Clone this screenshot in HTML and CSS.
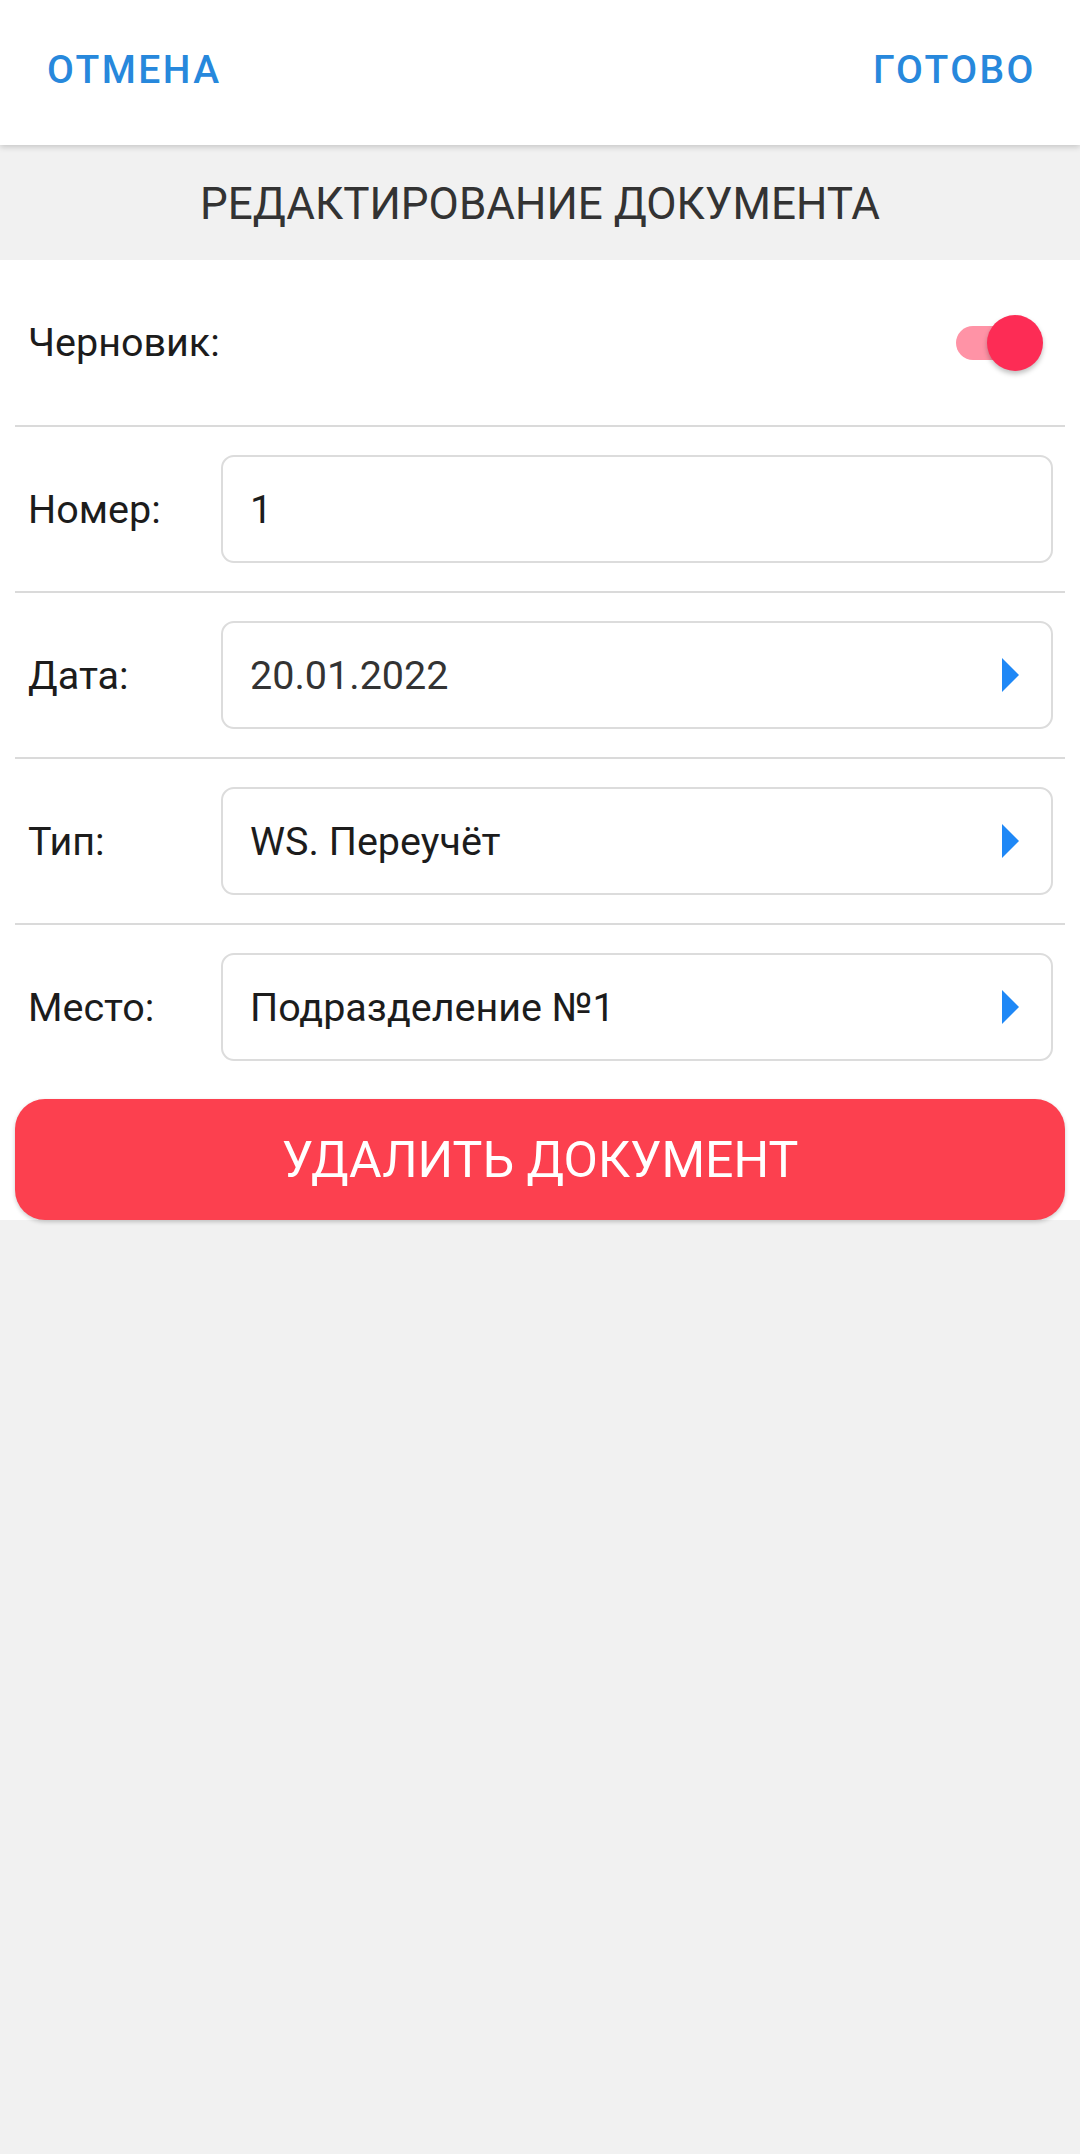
FILE: index.html
```html
<!DOCTYPE html>
<html lang="ru">
<head>
<meta charset="utf-8">
<title>Редактирование документа</title>
<link rel="stylesheet" href="styles.css">
</head>
<body>
<header class="topbar">
  <span class="topbar-btn">ОТМЕНА</span>
  <span class="topbar-btn">ГОТОВО</span>
</header>
<div class="section-title">РЕДАКТИРОВАНИЕ ДОКУМЕНТА</div>
<main class="form">
  <div class="row row-first">
    <span class="label">Черновик:</span>
    <span class="toggle"><span class="toggle-track"></span><span class="toggle-thumb"></span></span>
  </div>
  <div class="row">
    <span class="label">Номер:</span>
    <div class="field"><span class="field-value">1</span></div>
  </div>
  <div class="row">
    <span class="label">Дата:</span>
    <div class="field"><span class="field-value muted">20.01.2022</span><svg class="arrow" viewBox="0 0 17 34"><polygon points="0,0 17,17 0,34" /></svg></div>
  </div>
  <div class="row">
    <span class="label">Тип:</span>
    <div class="field"><span class="field-value">WS. Переучёт</span><svg class="arrow" viewBox="0 0 17 34"><polygon points="0,0 17,17 0,34" /></svg></div>
  </div>
  <div class="row row-last">
    <span class="label">Место:</span>
    <div class="field"><span class="field-value">Подразделение №1</span><svg class="arrow" viewBox="0 0 17 34"><polygon points="0,0 17,17 0,34" /></svg></div>
  </div>
  <button class="delete-btn">УДАЛИТЬ ДОКУМЕНТ</button>
</main>
</body>
</html>
```
FILE: styles.css
```css
html, body {
  margin: 0;
  padding: 0;
}
body {
  background: #f1f1f1;
  font-family: Roboto, "Noto Sans", "Liberation Sans", sans-serif;
  width: 1080px;
  min-height: 2154px;
}
.topbar {
  height: 145px;
  background: #ffffff;
  display: flex;
  justify-content: space-between;
  align-items: center;
  padding: 0 44px 6px 47px;
  box-sizing: border-box;
  box-shadow: 0 2px 6px rgba(0,0,0,0.18);
  position: relative;
  z-index: 2;
}
.topbar-btn {
  color: #2788dc;
  font-size: 39px;
  font-weight: 500;
  letter-spacing: 2.5px;
}
.section-title {
  height: 115px;
  display: flex;
  align-items: center;
  justify-content: center;
  font-size: 44px;
  color: #333333;
  background: #f1f1f1;
  padding-top: 2px;
  box-sizing: border-box;
}
.form {
  background: #ffffff;
  padding: 0 15px;
  display: flex;
  flex-direction: column;
}
.row {
  height: 166px;
  border-bottom: 2px solid #dadada;
  display: flex;
  align-items: center;
  box-sizing: border-box;
}
.row-first {
  height: 167px;
}
.row-last {
  border-bottom: none;
  height: 164px;
}
.label {
  width: 206px;
  padding-left: 13px;
  box-sizing: border-box;
  font-size: 39.5px;
  color: #1c1c1c;
  flex-shrink: 0;
}
.field {
  flex: 1;
  margin-right: 12px;
  height: 108px;
  border: 2.5px solid #dcdcdc;
  border-radius: 13px;
  box-sizing: border-box;
  display: flex;
  align-items: center;
  padding: 0 32px 0 27px;
}
.field-value {
  flex: 1;
  font-size: 39.5px;
  color: #1c1c1c;
}
.field-value.muted {
  color: #333333;
}
.arrow {
  width: 17px;
  height: 34px;
  fill: #1f88f6;
}
.toggle {
  margin-left: auto;
  margin-right: 22px;
  width: 87px;
  height: 56px;
  position: relative;
}
.toggle-track {
  position: absolute;
  left: 0;
  top: 11px;
  width: 76px;
  height: 34px;
  border-radius: 17px;
  background: #ff93a6;
}
.toggle-thumb {
  position: absolute;
  right: 0;
  top: 0;
  width: 56px;
  height: 56px;
  border-radius: 50%;
  background: #fd2c55;
  box-shadow: 0 3px 5px rgba(0,0,0,0.25);
}
.delete-btn {
  margin-top: 10px;
  height: 121px;
  width: 100%;
  border: none;
  border-radius: 30px;
  background: #fc404f;
  color: #ffffff;
  font-family: Roboto, "Noto Sans", "Liberation Sans", sans-serif;
  font-size: 50px;
  box-shadow: 0 2px 4px rgba(0,0,0,0.2);
  padding: 0;
}
```
